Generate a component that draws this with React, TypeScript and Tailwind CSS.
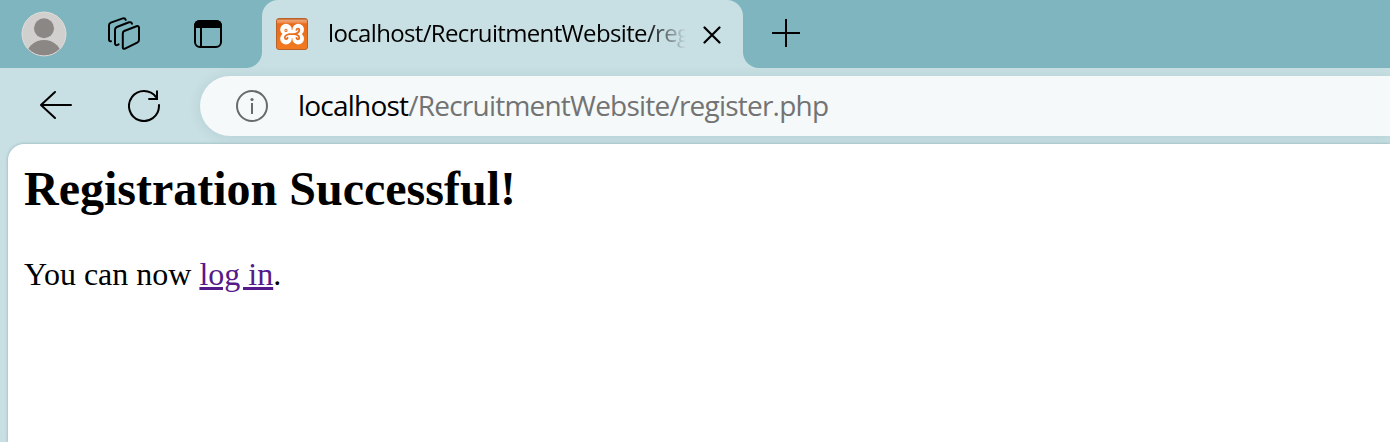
function ProfileIcon() {
  return (
    <svg className="ml-[21px] size-[46px] shrink-0" viewBox="0 0 46 46">
      <defs>
        <clipPath id="avatar"><circle cx="23" cy="23" r="22.3" /></clipPath>
      </defs>
      <circle cx="23" cy="23" r="22.3" fill="#d2d0ce" />
      <g clipPath="url(#avatar)" fill="#8a8785">
        <circle cx="23" cy="17.3" r="10" />
        <ellipse cx="23" cy="47" rx="18.3" ry="18" />
      </g>
      <circle cx="23" cy="23" r="21.9" fill="none" stroke="#dddbd8" strokeWidth="1" />
    </svg>
  );
}

function WorkspacesIcon() {
  return (
    <svg className="ml-[40px] size-[34px] shrink-0" viewBox="0 0 34 34" fill="none" stroke="#000" strokeWidth="2" strokeLinecap="round" strokeLinejoin="round">
      <path d="M17.2 14 L29.5 9.3 Q32 8.5 32 11 V22.8 Q32 24.9 30.2 25.7 L18 31.6 Q15.8 32.5 15.8 30.2 V16.4 Q15.8 14.6 17.2 14 Z" />
      <path d="M11.6 27.4 L10.6 27.9 Q8 28.8 8 26.2 V12.7 Q8 10.8 9.8 10 L22 5.3 Q24.4 4.6 25 6.8" />
      <path d="M4 24.2 Q2 24.7 2 22.6 V8.3 Q2 6.4 3.8 5.6 L15.8 1.4 Q18 0.8 18.7 2.8" />
    </svg>
  );
}

function TabActionsIcon() {
  return (
    <svg className="ml-[53px] size-[28px] shrink-0" viewBox="0 0 28 28">
      <rect x="1" y="1" width="26" height="26" rx="5" fill="none" stroke="#000" strokeWidth="2" />
      <path d="M0 8 V6 Q0 0 6 0 H22 Q28 0 28 6 V8 Z" />
      <path d="M7 8 V27" stroke="#000" strokeWidth="2" />
    </svg>
  );
}

function Favicon() {
  return (
    <svg className="size-8 shrink-0" viewBox="0 0 32 32">
      <defs>
        <linearGradient id="gloss" x1="0" y1="0" x2="0" y2="1">
          <stop offset="0" stopColor="#b85a20" />
          <stop offset="0.07" stopColor="#f0a575" />
          <stop offset="0.13" stopColor="#ed8a49" />
          <stop offset="0.18" stopColor="#e96a19" />
          <stop offset="1" stopColor="#f27b20" />
        </linearGradient>
      </defs>
      <rect x="0.5" y="0.5" width="31" height="31" rx="2.5" fill="url(#gloss)" stroke="#b9612a" />
      <g fill="#fff">
        <circle cx="10" cy="11.5" r="5.8" />
        <circle cx="10" cy="20.7" r="5.8" />
        <circle cx="22.2" cy="11.5" r="5.8" />
        <circle cx="22.2" cy="20.7" r="5.8" />
        <rect x="9" y="12" width="14" height="8.2" />
      </g>
      <g fill="none" stroke="#e96f20" strokeWidth="2.2" strokeLinecap="round" strokeLinejoin="round">
        <circle cx="10" cy="12.4" r="0.5" />
        <path d="M13.2 16.1 H18.7 M13.2 16.1 C10.3 16.6 8.4 18.2 8.9 20.1 C9.3 21.6 11.6 21.3 11.5 19.7" strokeWidth="1.8" />
        <path d="M20.4 11.9 C20.9 9.8 23.7 10.3 23.3 12.3 C23 14 21.8 15.2 18.7 16.1 C21.8 16.8 23.3 18.4 23.2 20.2 C23 21.8 20.7 21.8 20.4 19.9" strokeWidth="1.8" />
      </g>
    </svg>
  );
}

function TabStrip() {
  return (
    <header className="flex h-[68px] w-full shrink-0">
      <div className="flex w-[262px] shrink-0 items-center rounded-br-[16px] bg-[#7eb5bf]">
        <ProfileIcon />
        <WorkspacesIcon />
        <TabActionsIcon />
      </div>
      <div className="w-[481px] shrink-0 bg-[linear-gradient(#7eb5bf_50%,#c8dfe3_50%)]">
        <div className="flex h-full items-center rounded-t-[16px] bg-[#c8dfe3] pl-[14px]">
          <Favicon />
          <div className="mb-[2px] ml-[20px] w-[359px] overflow-hidden font-['Open_Sans','Noto_Sans',sans-serif] text-[24px] leading-[34px] tracking-[-0.65px] whitespace-nowrap text-black [mask-image:linear-gradient(to_right,black_318px,transparent_358px)]">
            localhost/RecruitmentWebsite/register.php
          </div>
          <svg className="mt-[2px] ml-[16px] size-[18px] shrink-0" viewBox="0 0 18 18" stroke="#000" strokeWidth="2.2" strokeLinecap="round">
            <path d="M1.5 1.5 L16.5 16.5 M16.5 1.5 L1.5 16.5" />
          </svg>
        </div>
      </div>
      <div className="flex flex-1 rounded-bl-[16px] bg-[#7eb5bf] pt-[19px] pl-[29px]">
        <svg className="size-[28px]" viewBox="0 0 28 28" stroke="#000" strokeWidth="2">
          <path d="M0 14 H28 M14 0 V28" />
        </svg>
      </div>
    </header>
  );
}

function Toolbar() {
  return (
    <nav className="flex h-[76px] shrink-0 items-center pl-[40px]">
      <svg className="size-[32px] shrink-0" viewBox="0 0 32 32" fill="none" stroke="#000" strokeWidth="2" strokeLinecap="round" strokeLinejoin="round">
        <path d="M15 2 L1 15 L15 28 M1 15 H31" />
      </svg>
      <svg className="ml-[56px] size-[32px] shrink-0" viewBox="0 0 32 32" fill="none" stroke="#000" strokeWidth="2">
        <path d="M31 14.2 V16 A15 15 0 1 1 28.2 7.3 M29 0.5 V9 H20.3" />
      </svg>
      <div className="ml-[40px] flex h-[60px] flex-1 items-center rounded-l-full bg-[#f5f9fa] pl-[36px] shadow-[0_1px_12px_rgba(60,120,130,0.15)]">
        <svg className="size-[32px] shrink-0" viewBox="0 0 32 32" fill="none" stroke="#666b6d" strokeWidth="2">
          <circle cx="16" cy="16" r="15" />
          <path d="M16 13 V24" />
          <circle cx="16" cy="9.5" r="1.6" fill="#666b6d" stroke="none" />
        </svg>
        <div className="mb-[2px] ml-[30px] font-['Open_Sans','Noto_Sans',sans-serif] text-[28px] leading-[38px] tracking-[-0.78px] whitespace-nowrap text-[#737373]">
          <span className="text-black">localhost</span>
          <span>/RecruitmentWebsite/register.php</span>
        </div>
      </div>
    </nav>
  );
}

export default function App() {
  return (
    <div className="flex h-[442px] w-full flex-col overflow-hidden bg-[#c8dfe3]">
      <TabStrip />
      <Toolbar />
      <main className="ml-[8px] flex-1 rounded-tl-[16px] bg-white pl-[16px] font-['Liberation_Serif',serif] text-black shadow-[0_0_3px_rgba(60,110,120,0.45)]">
        <h2 className="pt-[17px] text-[48px] leading-[55px] font-bold">Registration Successful!</h2>
        <p className="mt-[40px] text-[32px] leading-[37px]">
          You can now <a href="#login" className="text-[#551a8b] underline decoration-3 underline-offset-[2px]">log in</a>.
        </p>
      </main>
    </div>
  );
}
